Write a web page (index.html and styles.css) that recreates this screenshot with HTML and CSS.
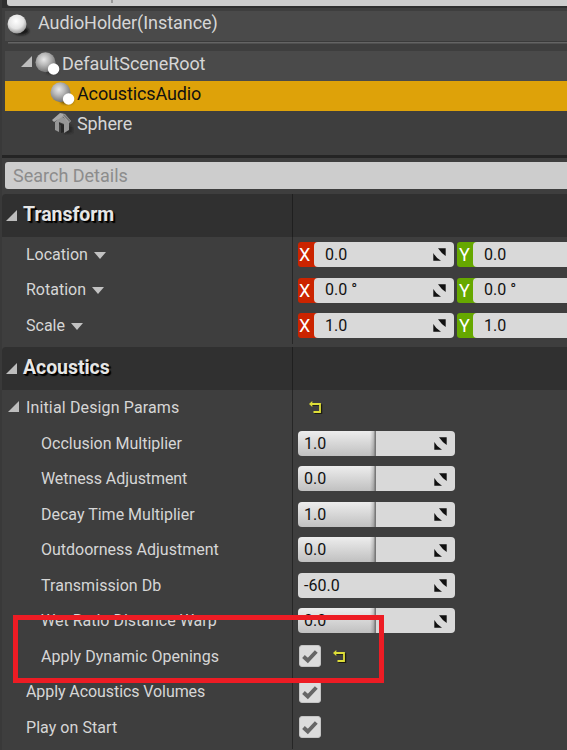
FILE: index.html
```
<!DOCTYPE html>
<html lang="en">
<head>
<meta charset="utf-8">
<title>Details</title>
<link rel="stylesheet" href="styles.css">
</head>
<body>
<svg width="0" height="0" class="defs">
  <defs>
    <radialGradient id="ball" cx=".42" cy=".36" r=".62"><stop offset="0" stop-color="#e8e8e8"/><stop offset=".45" stop-color="#bababa"/><stop offset="1" stop-color="#777"/></radialGradient>
    <radialGradient id="white" cx=".45" cy=".35" r=".65"><stop offset="0" stop-color="#fff"/><stop offset=".6" stop-color="#e4e4e4"/><stop offset="1" stop-color="#999"/></radialGradient>
    <filter id="soft" x="-50%" y="-50%" width="200%" height="200%"><feGaussianBlur stdDeviation="1"/></filter>
    <symbol id="expand" viewBox="0 0 11 11"><path d="M11 0V11H0Z" fill="#bdbdbd"/></symbol>
    <symbol id="scene" viewBox="0 0 26 24"><ellipse cx="17" cy="19" rx="7" ry="3.500" fill="#222" opacity=".5" filter="url(#soft)"/><circle cx="10.500" cy="10.300" r="10" fill="url(#ball)"/><circle cx="18.600" cy="17" r="5.700" fill="#fff"/></symbol>
    <symbol id="spin" viewBox="0 0 13 13"><path d="M5 .3H12.700V8Q8.500 5.500 5 .3Z" fill="#111"/><path d="M.3 5Q3 10 8 12.700H.3Z" fill="#111"/></symbol>
    <symbol id="undo" viewBox="0 0 14 13"><path d="M3 4H12.500V12.500H5.500" fill="none" stroke="#1c1c10" stroke-width="1.500"/><path d="M2 3H11V11H4.500" fill="none" stroke="#dede38" stroke-width="1.800"/><path d="M0 3L3.300 0V6Z" fill="#dede38"/></symbol>
    <symbol id="tick" viewBox="0 0 22 22"><path d="M4.500 11.500L8.800 15.500L17.300 6.500" fill="none" stroke="#666" stroke-width="3.900"/></symbol>
    <symbol id="house" viewBox="0 0 22 23"><path d="M12 21L18 13L21 15V20L16 22Z" fill="#222" opacity=".7" filter="url(#soft)"/><path d="M3 10L9 4L17 9V18L12 21V12L7 10V20L3 18Z" fill="#969696"/><path d="M7 11L12 13V20L9 21V13L7 12Z" fill="#262626"/><path d="M0 8L8 1L13 2L19 9L17 11L11 4.500L2 10Z" fill="#a9a9a9"/><path d="M11 3L12 2L19 9L17 10Z" fill="#777"/></symbol>
  </defs>
</svg>
<main class="panel">
  <div class="topfield"><i></i></div>
  <div class="tree">
    <div class="node actor"><svg width="25" height="26" viewBox="0 0 25 26"><ellipse cx="15" cy="19" rx="8" ry="4" fill="#111" opacity=".8" filter="url(#soft)"/><circle cx="11" cy="12" r="9.500" fill="url(#white)"/></svg><span>AudioHolder(Instance)</span></div>
    <div class="rule"></div>
    <div class="node root"><svg class="arrow" width="11" height="11"><use href="#expand"/></svg><svg width="26" height="24"><use href="#scene"/></svg><span>DefaultSceneRoot</span></div>
    <div class="node selected"><svg width="26" height="24"><use href="#scene"/></svg><span>AcousticsAudio</span></div>
    <div class="node mesh"><svg width="22" height="23"><use href="#house"/></svg><span>Sphere</span></div>
  </div>
  <div class="search"><span>Search Details</span></div>

  <section>
    <header><svg width="11" height="11"><use href="#expand"/></svg><h2>Transform</h2></header>
    <div class="row"><div class="label">Location<b class="drop"></b></div><div class="vec"><span class="axis x">X</span><span class="num">0.0<svg width="13" height="13"><use href="#spin"/></svg></span><span class="axis y">Y</span><span class="num">0.0</span></div></div>
    <div class="row rotation"><div class="label">Rotation<b class="drop"></b></div><div class="vec"><span class="axis x">X</span><span class="num">0.0 °<svg width="13" height="13"><use href="#spin"/></svg></span><span class="axis y">Y</span><span class="num">0.0 °</span></div></div>
    <div class="row"><div class="label">Scale<b class="drop"></b></div><div class="vec"><span class="axis x">X</span><span class="num">1.0<svg width="13" height="13"><use href="#spin"/></svg></span><span class="axis y">Y</span><span class="num">1.0</span></div></div>
  </section>

  <section class="last">
    <header><svg width="11" height="11"><use href="#expand"/></svg><h2>Acoustics</h2></header>
    <div class="row"><div class="label group"><svg width="11" height="11"><use href="#expand"/></svg>Initial Design Params</div><div class="value"><svg class="undo first" width="14" height="13"><use href="#undo"/></svg></div></div>
    <div class="row"><div class="label sub">Occlusion Multiplier</div><div class="value"><span class="spin fill">1.0<svg width="13" height="13"><use href="#spin"/></svg></span></div></div>
    <div class="row"><div class="label sub tight">Wetness Adjustment</div><div class="value"><span class="spin fill">0.0<svg width="13" height="13"><use href="#spin"/></svg></span></div></div>
    <div class="row"><div class="label sub">Decay Time Multiplier</div><div class="value"><span class="spin fill">1.0<svg width="13" height="13"><use href="#spin"/></svg></span></div></div>
    <div class="row"><div class="label sub">Outdoorness Adjustment</div><div class="value"><span class="spin fill">0.0<svg width="13" height="13"><use href="#spin"/></svg></span></div></div>
    <div class="row"><div class="label sub wide">Transmission Db</div><div class="value"><span class="spin">-60.0<svg width="13" height="13"><use href="#spin"/></svg></span></div></div>
    <div class="row"><div class="label sub">Wet Ratio Distance Warp</div><div class="value"><span class="spin fill">0.0<svg width="13" height="13"><use href="#spin"/></svg></span></div></div>
    <div class="row"><div class="label sub wide">Apply Dynamic Openings</div><div class="value"><span class="check"><svg width="22" height="22"><use href="#tick"/></svg></span><svg class="undo" width="14" height="13"><use href="#undo"/></svg></div><div class="highlight"></div></div>
    <div class="row"><div class="label tight">Apply Acoustics Volumes</div><div class="value"><span class="check"><svg width="22" height="22"><use href="#tick"/></svg></span></div></div>
    <div class="row"><div class="label wide">Play on Start</div><div class="value"><span class="check"><svg width="22" height="22"><use href="#tick"/></svg></span></div></div>
  </section>
</main>
</body>
</html>
```
FILE: styles.css
```
* { box-sizing: border-box; }
body { margin: 0; background: #3e3e3e; font: 16px/20px Roboto, sans-serif; color: #d6d6d6; overflow: hidden; }
svg { display: block; flex: none; }
.defs { position: absolute; }
.panel { width: 567px; height: 750px; border-left: 2px solid #393939; overflow: hidden; }
.topfield { height: 8px; background: #2f2f2f; padding: 0 0 2px 5px; }
.topfield i { display: block; height: 6px; background: #cdcdcd; border-radius: 0 0 0 3px; }
.topfield i::after { content: ""; display: block; width: 2px; height: 3px; margin-left: 104px; background: #999; }
.tree { height: 147px; padding: 3px 0 0 3px; }
.node { height: 30px; display: flex; align-items: center; font-size: 18px; white-space: nowrap; }
.actor { background: #4a4a4a; padding-left: 1px; }
.actor span { margin: -6px 0 0 7px; letter-spacing: -.05px; }
.actor svg { margin-top: -2px; }
.rule { height: 10px; background: linear-gradient(#3a3a3a 0 1px, #646464 1px 2px, #505050 2px 3px, #3e3e3e 3px); margin-left: 3px; }
.root { background: #4a4a4a; padding-left: 16px; }
.root .arrow { margin: -10px 3px 0 0; }
.root svg + svg { margin-top: -5px; }
.root span { margin: -4px 0 0 1px; letter-spacing: -.05px; }
.selected { background: #dea209; color: #111; padding-left: 45px; }
.selected svg { margin-top: -5px; }
.selected span { margin: -4px 0 0 1px; letter-spacing: -.13px; }
.mesh { padding-left: 47px; }
.mesh svg { margin-top: -5px; }
.mesh span { margin: -4px 0 0 3px; letter-spacing: -.1px; }
.search { height: 39px; border-top: 3px solid #242424; padding: 4px 0 5px 3px; }
.search span { display: flex; align-items: center; height: 27px; padding-left: 8px; background: #cdcdcd; color: #8c8c8c; border-radius: 3px 0 0 3px; font-size: 18px; }
section { height: 153px; background: linear-gradient(#262626, #262626) 290px 0 / 1px 150px no-repeat; }
.last { height: 402px; background-size: 1px 402px; }
header { height: 43px; display: flex; align-items: center; padding-left: 4px; background: linear-gradient(#1f1f1f, #1f1f1f) 290px 0 / 1px 100% no-repeat #303030; border-radius: 4px 0 0 0; }
header svg { margin-top: 0; }
h2 { margin: -2px 0 0 6px; font-size: 19.5px; line-height: 24px; font-weight: 700; color: #e6e6e6; text-shadow: 1px 1px #000, 2px 2px 1px #000; letter-spacing: -.05px; }
.row { height: 35.5px; display: grid; grid-template-columns: 292px 1fr; align-items: center; position: relative; white-space: nowrap; }
.label { padding: .5px 0 0 24px; display: flex; align-items: center; }
.rotation .label { padding-top: 0; }
.label.sub { padding-left: 39px; }
.label.group { padding-left: 6px; letter-spacing: .14px; }
.group svg { margin: -3px 7px 0 0; }
.tight { letter-spacing: -.08px; }
.wide { letter-spacing: .05px; }
.drop { border: 6px solid transparent; border-top: 7px solid #c2c2c2; border-bottom: 0; margin-left: 6px; }
.vec { display: flex; padding-left: 4px; color: #111; }
.vec .axis { width: 22px; height: 25px; margin-right: -6px; border-radius: 3px 0 0 3px; color: #fff; font-size: 18px; line-height: 26px; padding-left: 1px; }
.vec .y { padding-left: 2px; }
.x { background: #cb2400; }
.y { background: #66a800; }
.num { height: 25px; width: 140px; margin-right: 3px; border-radius: 4px; background: #d9d9d9; position: relative; flex: none; display: flex; align-items: center; justify-content: space-between; padding: 0 8px 0 11px; }
.value { display: flex; align-items: center; padding-left: 4px; }
.spin { width: 157px; height: 25px; border-radius: 4px; background: #d9d9d9; color: #111; display: flex; align-items: center; justify-content: space-between; padding: .5px 8px 0 6px; }
.fill { background: linear-gradient(90deg, transparent 72px, #0002 75px, #0003 76px, #777 77px 78px, #d9d9d9 78px), linear-gradient(#ededed, #c0c0c0); }
.check { width: 22px; height: 22px; margin-left: 1px; border-radius: 3px; background: #dcdcdc; border: 1px solid #c4c4c4; }
.check svg { margin: -1px; }
.undo { margin-left: 12px; }
.undo.first { margin-left: 11px; }
.highlight { position: absolute; left: 11px; top: -24px; width: 371px; height: 68px; border: 5px solid #ed1c24; z-index: 2; }
```
